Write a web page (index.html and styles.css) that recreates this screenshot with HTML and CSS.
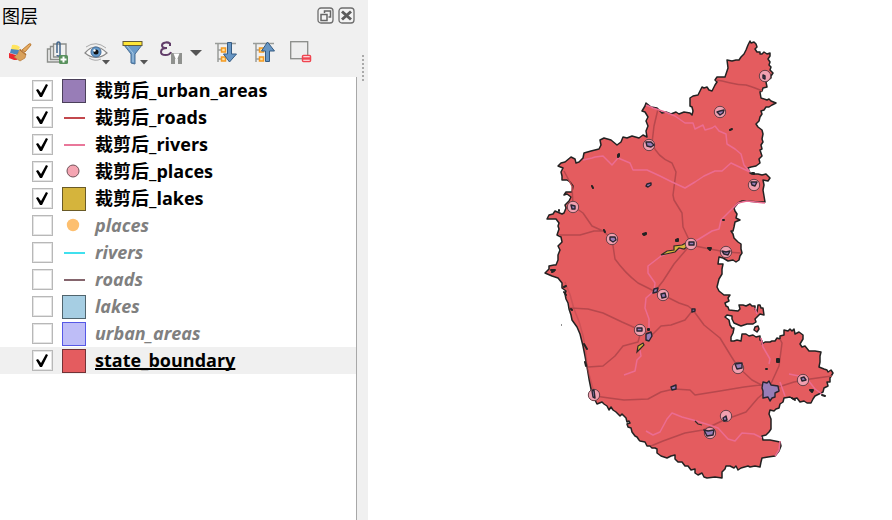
FILE: index.html
```html
<!DOCTYPE html>
<html lang="zh-CN">
<head>
<meta charset="utf-8">
<title>图层</title>
<link rel="stylesheet" href="styles.css">
</head>
<body>
<main class="app">
<section class="dock">
  <header class="titlebar">
    <h1>图层</h1>
    <button class="dock-button" type="button" aria-label="浮动"><svg viewBox="0 0 17 17"><rect x="1" y="1" width="15" height="15" rx="3" fill="#f4f4f4" stroke="#6e6e6e" stroke-width="1.3"/><path d="M7.500 6V4h6v6h-2M4 7.500h6v6H4z" fill="none" stroke="#666" stroke-width="1.500"/></svg></button>
    <button class="dock-button" type="button" aria-label="关闭"><svg viewBox="0 0 17 17"><rect x="1" y="1" width="15" height="15" rx="3" fill="#f4f4f4" stroke="#6e6e6e" stroke-width="1.3"/><path d="M4 4.500l9 8M13 4.500l-9 8" stroke="#5c5c5c" stroke-width="3"/></svg></button>
  </header>
  <div class="toolbar">
    <button type="button" aria-label="图层样式"><svg viewBox="0 0 24 24"><path d="M4 4q4-1 8 2l-2 4-7-1z" fill="#ffe45e"/><path d="M3 8l8 1-1 5-8-2z" fill="#4f86bd"/><path d="M1 12l7 2 1 5-3 0-5-2z" fill="#ee2831"/><path d="M14 9l7-6q2-1 2 1l-6 7z" fill="#e4aa60" stroke="#bd7c35"/><path d="M12 8l6 5-1 4-5 3-6-4q5-3 6-8z" fill="#d9a15b" stroke="#b6793a" stroke-width=".7"/><path d="M12 9l6 5" stroke="#a86b30"/></svg></button>
    <button type="button" aria-label="添加组"><svg viewBox="0 0 24 24"><g fill="#f1f1f0" stroke="#8c8e8b" stroke-width="1.4"><path d="M4 8H1.500v13H14M7 5.500H4.500v13H16M7.500 3H20v13H7.500z"/></g><path d="M11 12V3q0-2 1.500-2t1.500 2v11q0 1-1.500 1T11 14" fill="none" stroke="#42658b" stroke-width="1.500"/><rect x="13" y="14" width="9" height="9" rx="1.500" fill="#59915d"/><path d="M17.500 15.500v6M14.500 18.500h6" stroke="#fff" stroke-width="2"/></svg></button>
    <button type="button" class="menu" aria-label="管理地图主题"><svg viewBox="0 0 28 24"><path d="M1 12Q11 0 23 12Q12 21 1 12z" fill="#f8f8f8" stroke="#888" stroke-width="1.2"/><path d="M2 6Q12-1 22 7M5 17q6 4 12 1" fill="none" stroke="#aaa"/><circle cx="12" cy="11" r="5" fill="#669bcb" stroke="#426b98"/><circle cx="12" cy="11" r="2.500" fill="#111"/><circle cx="10.500" cy="9.500" r="1.200" fill="#fff"/><path d="M18 19h8l-4 4.500z" fill="#555"/></svg></button>
    <button type="button" class="menu" aria-label="筛选图例"><svg viewBox="0 0 28 24"><path d="M2 4l7 9v9l4 1V13l7-9z" fill="#6b9bc8" stroke="#466d94"/><path d="M5 5l6 7v9" fill="none" stroke="#a9c9e4"/><rect x="1" y=".5" width="19" height="4" fill="#ffe637" stroke="#625a36"/><path d="M18 19h8l-4 4.500z" fill="#555"/></svg></button>
    <button type="button" aria-label="按表达式筛选"><svg viewBox="0 0 24 24"><path d="M10 5V2.500Q8 1 5.500 1.500Q2 2 2 4.500Q2 7 7 7Q1 7 1 11Q1 14 5.500 14Q10 14 11 11" fill="none" stroke="#613d69" stroke-width="2"/><path d="M11 12h11v11H11z" fill="#8f918e"/><path d="M13.500 12.500h6l-2 5v4h-2v-4z" fill="#fff"/><path d="M15 18h3v5h-3z" fill="#f0f0f0"/></svg></button>
    <span class="caret" aria-hidden="true"></span>
    <button type="button" aria-label="全部展开"><svg viewBox="0 0 24 24"><path d="M1 2.500h21M4 3v18M4 9h4M4 18h4" fill="none" stroke="#999c99" stroke-width="1.500"/><path d="M7.500 7h4v4h-4zM7.500 16h4v4h-4z" fill="#ffe0a0" stroke="#f49a21" stroke-width="1.500"/><path d="M13.500 1.500h4V13h5l-7 8-6-8h4z" fill="#6796c4" stroke="#345b83"/></svg></button>
    <button type="button" aria-label="全部折叠"><svg viewBox="0 0 24 24"><path d="M1 2.500h21M4 3v18M4 9h4M4 18h4" fill="none" stroke="#999c99" stroke-width="1.500"/><path d="M7.500 7h4v4h-4zM7.500 16h4v4h-4z" fill="#ffe0a0" stroke="#f49a21" stroke-width="1.500"/><path d="M13.500 20.500h4V10h5l-7-9-6 9h4z" fill="#6796c4" stroke="#345b83"/></svg></button>
    <button type="button" aria-label="移除图层"><svg viewBox="0 0 24 24"><rect x=".7" y=".7" width="17" height="17" fill="#eee" stroke="#898b88" stroke-width="1.3"/><rect x="12.500" y="14.500" width="8" height="6" rx="1" fill="#fff" stroke="#f04450" stroke-width="1.500"/><path d="M13 17.500h7" stroke="#f04450" stroke-width="2.500"/></svg></button>
  </div>
  <div class="list-frame">
    <ul class="layers">
      <li><label><input type="checkbox" checked><svg class="symbol" viewBox="0 0 24 24"><rect x=".5" y=".5" width="23" height="23" fill="#987db7" stroke="#4b405a"/></svg><span>裁剪后_urban_areas</span></label></li>
      <li><label><input type="checkbox" checked><svg class="symbol" viewBox="0 0 24 24"><path d="M2 12h21" stroke="#c3484d" stroke-width="2"/></svg><span>裁剪后_roads</span></label></li>
      <li><label><input type="checkbox" checked><svg class="symbol" viewBox="0 0 24 24"><path d="M2 12h21" stroke="#e9779a" stroke-width="2"/></svg><span>裁剪后_rivers</span></label></li>
      <li><label><input type="checkbox" checked><svg class="symbol" viewBox="0 0 24 24"><circle cx="11" cy="11" r="6" fill="#f4a5b2" stroke="#705158"/></svg><span>裁剪后_places</span></label></li>
      <li><label><input type="checkbox" checked><svg class="symbol" viewBox="0 0 24 24"><rect x=".5" y=".5" width="23" height="23" fill="#d5b43c" stroke="#695a27"/></svg><span>裁剪后_lakes</span></label></li>
      <li class="off"><label><input type="checkbox"><svg class="symbol" viewBox="0 0 24 24"><circle cx="11" cy="11" r="6.200" fill="#fdbf6f"/></svg><span>places</span></label></li>
      <li class="off"><label><input type="checkbox"><svg class="symbol" viewBox="0 0 24 24"><path d="M2 12h21" stroke="#40e0ee" stroke-width="2"/></svg><span>rivers</span></label></li>
      <li class="off"><label><input type="checkbox"><svg class="symbol" viewBox="0 0 24 24"><path d="M2 12h21" stroke="#85656d" stroke-width="2"/></svg><span>roads</span></label></li>
      <li class="off"><label><input type="checkbox"><svg class="symbol" viewBox="0 0 24 24"><rect x=".5" y=".5" width="23" height="23" fill="#a6cee3" stroke="#50646d"/></svg><span>lakes</span></label></li>
      <li class="off"><label><input type="checkbox"><svg class="symbol" viewBox="0 0 24 24"><rect x=".5" y=".5" width="23" height="23" fill="#bebdf7" stroke="#5658e6"/></svg><span>urban_areas</span></label></li>
      <li class="current"><label><input type="checkbox" checked><svg class="symbol" viewBox="0 0 24 24"><rect x=".5" y=".5" width="23" height="23" fill="#e45c5f" stroke="#723236"/></svg><span>state_boundary</span></label></li>
    </ul>
    <div class="splitter"></div>
  </div>
  <svg class="grip" viewBox="0 0 2 26" aria-hidden="true"><path d="M1 0v26" stroke="#aaa" stroke-width="2" stroke-dasharray="2 2"/></svg>
</section>
<section class="map" aria-label="地图">
<svg viewBox="368 0 524 520">
  <defs>
    <circle id="place" r="5.700" fill="#f1a0b0" stroke="#674047"/>
  </defs>
  <path class="boundary" d="M750 41L751 43 754 42 756 44 757 47 755 49 757 52 760 52 760 54 762 54 764 52 767 54 770 53 770 56 768 59 770 62 769 65 771 67 770 70 773 73 771 76 771 78 766 82 767 87 763 88 762 91 760 92 761 98 767 100 769 99 771 101 776 103 772 105 769 107 766 107 764 110 761 111 762 114 760 117 759 121 756 124 758 127 762 130 763 134 762 139 763 142 761 145 762 149 760 150
  761 153 762 156 759 159 760 163 756 166 751 167 748 168 750 173 752 174 758 174 762 175 766 174 770 178 768 181 763 180 764 185 763 190 765 202 758 202 747 201 742 201 738 203 734 208 735 211 737 214 736 218 740 220 735 222 734 227 733 231 731 231 733 234 734 238 738 242 741 244 741 249 742 253 740 256 739 260 736 262 733 260 728 261 723 258 719 257 718 264 723 264 722 269
  722 274 719 279 717 287 719 291 724 295 730 295 728 298 729 301 725 303 726 306 728 307 729 310 738 311 740 309 739 305 743 305 746 306 750 304 752 306 755 306 755 309 757 312 758 305 760 305 761 308 763 308 764 315 760 314 758 316 755 319 756 322 753 324 747 324 741 326 734 323 732 319 732 316 727 315 725 317 729 320 730 325 732 328 734 328 733 333 731 337 731 341 734 341 737 340 741 341 742 334 746 334 749 336 753 335 756 337 760 336 760 340 762 341 762 344 765 342 770 342 772 341 775 341 777 338 780 339 780 336 784 335 784 330 788 331 790 329 792 331 794 329 795 334 799 332 803 335 803 339 800 344 802 347 805 346 809 351 815 351 821 352 820 356 820 362 819 367 824 369 827 370 828 372 831 370 833 373 830 378 830 382 827 382 828 386 824 388 823 392 819 394 815 396 813 399 811 403 807 403 804 401 800 402 797 398 793 399 790 397 784 398 783 402 780 404 779 408 776 409 774 411 770 410 769 414 771 419 771 424 771 429 769 432 766 435 762 436 763 440 770 440 775 441 780 442 781 446 779 451 775 456 768 457 762 458 761 462 760 467 755 466 750 467 748 466 741 468 738 470 736 466 734 468 730 466 726 466 725 469 722 472 722 478 715 477 707 478 704 477 702 473 698 475 695 473 695 469 691 470 688 466 685 466 682 462 678 462 675 459 675 455 671 456 667 458 661 456 657 453 657 449 655 448 652 448 650 446 647 446 645 442 640 441
  639 440 637 437 635 436 632 432 631 428 628 427 627 424 630 423 629 421 627 422 626 418 624 416 622 414 620 416 616 412 613 410 611 407 609 410 607 406 604 404 602 402 597 404 595 400 592 397 591 389 589 379 587 367 585 356 583 346 580 334 577 327 572 320 571 315 569 309 568 303 566 299 565 294 566 291 562 288 562 283 558 278 552 276 545 273 549 269 549 266 554 265 556 265 558 260 558 255 560 250 558 246 562 242 561 237 557 235 559 229 558 226 559 223 556 219 547 219 549 215 553 214 555 211 562 214 564 213 566 208 565 205 569 201 571 197 567 194 564 195 566 192 572 192 573 186 570 182 567 180 562 180 562 176 561 172 563 168 558 166 561 163 565 162 571 157 575 159 576 163 579 162 583 158 584 153 591 151 599 149 601 145 600 140 604 138 611 140 617 145 621 142 623 137 627 138 632 136 639 138 643 135 647 137 646 131 648 126 646 121 648 117 645 112 642 111 645 106 646 103 651 107 657 108 662 113 666 112 671 114 676 112 679 114 684 112 690 113 692 115 693 111 692 107 690 106 690 98 693 96 698 95 702 87 704 88 707 87 709 90 712 91 715 85 717 82 715 80 717 77 725 77 728 68 727 60 732 61 736 60 739 60 741 57 744 54 746 50 748 45z"/>
  <path class="boundary" d="M755 327l3-1 1 3-2 3-3-2z"/>
  <g class="roads">
    <path d="M716 80C730 82 734 85 746 85Q756 88 762 91M658 109L654 126 652 143Q657 157 672 163L676 172 673 195 674 200 682 213 683 227 691 244 674 264 663 281 656 290M564 171L572 186 573 206 583 213 592 226 603 231 612 239 615 259Q625 273 638 283L654 291M559 235H580L594 231 603 231M690 245L710 249 726 252 741 253M663 295L679 303 688 306 693 310 685 320 671 325 661 326 653 334 640 330 622 322 603 313 588 309 570 308M693 310L704 325 720 338 731 356 738 367 752 380 769 389M588 367L603 366 615 356 623 346 638 342 641 331M595 396L609 398 624 400 648 399 661 392 674 389 690 390 695 395 720 391 744 387 769 384M769 390L794 382 810 379 832 376M769 388L779 366 782 343 780 339M651 446L663 441 685 433 703 430 724 420 746 412 758 398 769 389"/>
    <path d="M565 282Q571 295 574 309Q586 335 587 367L595 396" opacity=".5"/>
  </g>
  <g class="rivers">
    <path d="M646 105L653 108 665 112 675 116 685 123 693 123 695 129 703 125 705 130 712 128 715 126 719 131 726 134 727 144 735 149 741 154 744 165 750 172M583 160L592 158 595 157 603 156 612 165 618 158 630 163 633 170 647 170 660 176 672 182 685 188 695 182 704 176 715 171 722 171 731 163 750 172M765 203L747 201 738 203 721 220 719 229 712 231 699 239 690 244 680 249 672 252 661 256 648 266 648 273 655 283 654 291 646 298 645 308 649 319 649 329M640 350L641 356 637 360 635 371 624 375M646 431L653 435 660 432 667 419 672 413 682 417 693 420 706 424 718 428 728 439 735 441 742 433 754 434 762 438M780 441L779 450 775 456M755 308L757 314M761 338L763 347 770 359 769 364M780 382L785 396M789 374L799 376 808 380 815 389 822 394"/>
  </g>
  <g class="lakes"><path d="M661 255L667 251 674 250 674 246 682 245 686 243 691 244 684 249 679 248 675 252 666 254z"/><path d="M637 352l1-6 5-3 1 2-4 4z"/><path d="M695 421l3 3 4 1" fill="none"/></g>
  <g>
    <use href="#place" x="765" y="76"/><use href="#place" x="720" y="112"/><use href="#place" x="649" y="145"/><use href="#place" x="573" y="207"/><use href="#place" x="754" y="185"/><use href="#place" x="612" y="239"/><use href="#place" x="691" y="244"/><use href="#place" x="726" y="252"/><use href="#place" x="663" y="295"/><use href="#place" x="640" y="330"/><use href="#place" x="594" y="395"/><use href="#place" x="738" y="368"/><use href="#place" x="803" y="380"/><use href="#place" x="726" y="416"/><use href="#place" x="710" y="433"/>
  </g>
  <g class="urban">
    <path d="M763 75l2 1v3l-2-1zM717 112l3-1 4-1-1 3-3 2zM646 142l5 0 3 3-3 2-4-1zM571 205l4 1v3l-3 0zM751 182l3 0 3 0-2 4-3-1zM610 237l5 0 1 3-3 2-3-2zM689 242l5 0v3l-5 0zM722 251l4 1 4-1-2 4-4-1zM661 294l4-1 1 4-4 1zM637 328l5 0v3l-5 0zM592 391l2-1 1 8-2-1zM735 364l7-1v5l-5 1zM801 378l3-1 2 3-4 1zM723 418l3-2 1 4-3 1zM704 430l4 1 6-1-1 5-6 1zM654 289l4-1-1 4-4 1zM646 334l5-2 1 4-3 5-3-1zM671 387l5-2v4l-4 1zM692 309l3 0 0 2-3 1zM647 184l4-1 0 2-3 2-2-1z"/>
    <path d="M763 382l4 1 2-2 2 4 7 1 1 5-4 2 0 4-3 1-2 3-2-4-5 1v-7l-1-3z"/>
  </g>
  <g class="spots"><path d="M618 155l1-1v2l-1 1zM592 186l1 2M730 130l2-1M604 230l1 2M643 234l3-1v1l-2 1zM676 240l2-1v2h-2zM708 248l3 0-1 2zM723 220h1M752 173h2v1zM551 270l4 0M552 272l2-1M559 210v1M564 287l2-1M564 292l2 3M571 309l1 1M584 344l3 5M585 362l1 4M648 329h1v1h-1zM777 359h2v3h-2zM766 369h1M810 390l3 0-1 2zM822 395l3 1M792 398l3 2"/></g>
  <path d="M561 325h1" stroke="#222"/>
</svg>
</section>
</main>
</body>
</html>
```
FILE: styles.css
```css
* { box-sizing: border-box; }
body {
  margin: 0;
  background: #fff;
  color: #000;
  font: 18px/27px "Open Sans", "Noto Sans CJK SC", sans-serif;
}
.app { display: flex; min-height: 100vh; }
.dock {
  position: relative;
  display: flex;
  flex-direction: column;
  flex: 0 0 368px;
  background: #f0f0f0;
}
.titlebar {
  display: flex;
  align-items: center;
  gap: 4px;
  height: 31px;
  padding: 0 13px 0 2px;
}
h1 {
  flex: 1;
  margin: 0;
  font: 18px/31px "Noto Sans CJK SC", sans-serif;
}
button { padding: 0; border: 0; background: none; }
button svg { display: block; width: 100%; height: 100%; }
.dock-button { width: 17px; height: 17px; }
.toolbar {
  display: flex;
  align-items: center;
  gap: 14px;
  height: 46px;
  padding: 0 8px 2px;
}
.toolbar button { width: 24px; height: 24px; }
.toolbar .menu { width: 28px; margin-right: -4px; }
.caret {
  margin: 0 -2px 0 -8px;
  border: 6px solid transparent;
  border-top-color: #555;
  border-bottom: 0;
}
.list-frame { display: flex; flex: 1; }
.layers {
  flex: 1;
  margin: 0;
  padding: 0;
  list-style: none;
  background: #fff;
  border-right: 1px solid #a8a8a8;
}
.layers label {
  display: flex;
  align-items: center;
  gap: 9px;
  height: 27px;
  padding-left: 32px;
  font-weight: 700;
}
input {
  appearance: none;
  width: 21px;
  height: 21px;
  margin: 0;
  border: 1px solid #b8b8b8;
  background: #fff;
  box-shadow: inset 0 0 0 1px #e4e4e4;
}
input:checked::after {
  content: "";
  display: block;
  width: 19px;
  height: 19px;
  background: #000;
  clip-path: polygon(3px 9px, 5px 8px, 8px 12px, 13px 3px, 15px 4px, 9px 16px, 7px 16px);
}
.symbol { width: 24px; height: 24px; }
.off { color: #808080; font-style: italic; }
.current { background: #f0f0f0; }
.current span { text-decoration: underline 2px; text-underline-offset: 1px; text-decoration-skip-ink: none; }
.splitter { width: 11px; }
.grip { position: absolute; top: 55px; right: 4px; width: 2px; height: 26px; }
.map { flex: 1; min-width: 0; }
.map svg { display: block; width: 100%; height: auto; }
.boundary { fill: #e45c5f; stroke: #222; stroke-width: 1.5; stroke-linejoin: round; }
.roads, .rivers { fill: none; stroke-width: 1.5; stroke-linejoin: round; }
.roads { stroke: #b7484d; }
.rivers { stroke: #eb6c91; }
.lakes { fill: #d5b43c; stroke: #302b25; stroke-width: 1.2; }
.urban { fill: #987db7; stroke: #282530; stroke-width: 1.4; stroke-linejoin: round; }
.spots { fill: #57445f; stroke: #222; stroke-width: 2; stroke-linecap: round; stroke-linejoin: round; }
```
